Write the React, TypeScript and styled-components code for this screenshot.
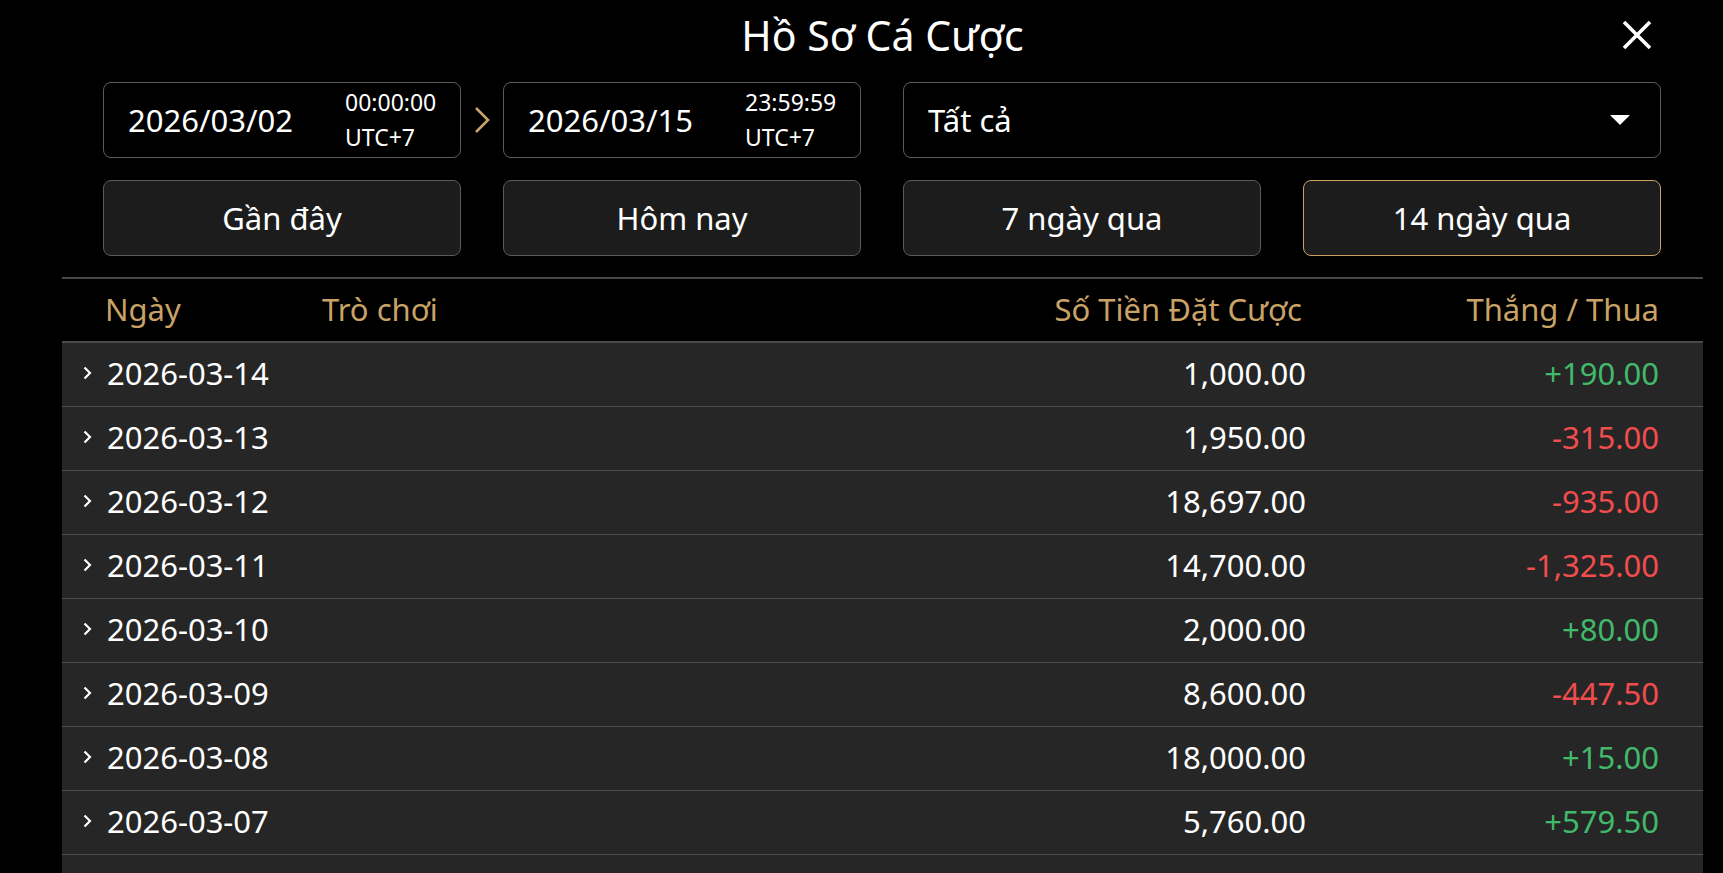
import React from "react";
import styled, { createGlobalStyle } from "styled-components";

const GlobalStyle = createGlobalStyle`
  html, body {
    margin: 0;
    padding: 0;
    background: #000;
    font-family: "Noto Sans", "Open Sans", sans-serif;
    color: #fff;
  }
  * { box-sizing: border-box; }
`;

const Page = styled.div`
  width: 1723px;
  height: 873px;
  overflow: hidden;
  padding: 0 20px 0 62px;
  display: flex;
`;

const Modal = styled.div`
  flex: 1;
  display: flex;
  flex-direction: column;
`;

const TitleBar = styled.div`
  display: grid;
  grid-template-columns: 1fr auto 1fr;
  align-items: center;
  height: 70px;
  padding: 0 51px;
`;

const Title = styled.h1`
  grid-column: 2;
  margin: 0;
  font-size: 41px;
  font-weight: 400;
  line-height: 1;
  color: #fff;
`;

const CloseButton = styled.button`
  grid-column: 3;
  justify-self: end;
  width: 30px;
  height: 30px;
  padding: 0;
  border: 0;
  background: transparent;
  display: flex;
  align-items: center;
  justify-content: center;
  cursor: pointer;
`;

const Filters = styled.div`
  display: flex;
  flex-direction: column;
  gap: 22px;
  padding: 12px 42px 21px 41px;
`;

const DateRow = styled.div`
  display: grid;
  grid-template-columns: 358px 42px 358px 42px 1fr;
  height: 76px;
`;

const DateBox = styled.div`
  display: flex;
  align-items: center;
  justify-content: space-between;
  border: 1.5px solid #5b5b5b;
  border-radius: 8px;
  background: #000;
  padding: 0 23px 0 24px;
`;

const DateText = styled.span`
  font-size: 31px;
  line-height: 1;
`;

const TimeStack = styled.div`
  display: flex;
  flex-direction: column;
  gap: 7px;
  font-size: 23px;
  line-height: 1.2;
  width: 92px;
`;

const Arrow = styled.div`
  display: flex;
  align-items: center;
  justify-content: center;
`;

const Select = styled.div`
  grid-column: 5;
  display: flex;
  align-items: center;
  justify-content: space-between;
  border: 1.5px solid #5b5b5b;
  border-radius: 8px;
  background: #000;
  padding: 0 30px 0 24px;
  font-size: 31px;
`;

const Presets = styled.div`
  display: grid;
  grid-template-columns: repeat(4, 1fr);
  gap: 42px;
  height: 76px;
`;

const PresetButton = styled.button<{ $active?: boolean }>`
  border: 1.5px solid ${(p) => (p.$active ? "#c9a266" : "#5b5b5b")};
  border-radius: 8px;
  background: #1c1c1c;
  color: #fff;
  font-family: inherit;
  font-size: 31px;
  cursor: pointer;
`;

const Table = styled.div`
  flex: 1;
  border-top: 2px solid #474747;
  display: flex;
  flex-direction: column;
`;

const HeaderRow = styled.div`
  display: grid;
  grid-template-columns: 217px 1fr 300px 353px;
  align-items: center;
  height: 64px;
  padding: 0 44px 2px 43px;
  border-bottom: 2px solid #4a4a4a;
`;

const HeaderCell = styled.div<{ $right?: boolean; $pr?: number }>`
  color: #c9a266;
  font-size: 31px;
  text-align: ${(p) => (p.$right ? "right" : "left")};
  padding-right: ${(p) => p.$pr ?? 0}px;
`;

const Body = styled.div`
  flex: 1;
  background: #262626;
  display: flex;
  flex-direction: column;
`;

const Row = styled.div`
  display: grid;
  grid-template-columns: 240px 1fr 300px 353px;
  align-items: center;
  height: 64px;
  flex-shrink: 0;
  padding: 0 44px 3px 20px;
  border-bottom: 1px solid #4e4e4e;
  font-size: 31px;
`;

const DateCell = styled.div`
  display: flex;
  align-items: center;
  gap: 15px;
`;

const Amount = styled.div`
  text-align: right;
`;

const WinLoss = styled.div<{ $positive: boolean }>`
  text-align: right;
  color: ${(p) => (p.$positive ? "#41b96a" : "#f24d4d")};
`;

const CloseIcon = () => (
  <svg width="30" height="30" viewBox="0 0 30 30">
    <path d="M2 2 L28 28 M28 2 L2 28" stroke="#fff" strokeWidth="3.6" strokeLinecap="butt" />
  </svg>
);

const GoldChevron = () => (
  <svg width="16" height="26" viewBox="0 0 16 26">
    <polyline points="2,1 14,13 2,25" fill="none" stroke="#c9a266" strokeWidth="2.6" />
  </svg>
);

const Caret = () => (
  <svg width="20" height="10" viewBox="0 0 20 10">
    <polygon points="0,0 20,0 10,10" fill="#fff" />
  </svg>
);

const RowChevron = () => (
  <svg width="10" height="14" viewBox="0 0 10 14">
    <polyline points="2.5,1.5 8,7 2.5,12.5" fill="none" stroke="#fff" strokeWidth="2.2" />
  </svg>
);

const rows = [
  { date: "2026-03-14", amount: "1,000.00", wl: "+190.00" },
  { date: "2026-03-13", amount: "1,950.00", wl: "-315.00" },
  { date: "2026-03-12", amount: "18,697.00", wl: "-935.00" },
  { date: "2026-03-11", amount: "14,700.00", wl: "-1,325.00" },
  { date: "2026-03-10", amount: "2,000.00", wl: "+80.00" },
  { date: "2026-03-09", amount: "8,600.00", wl: "-447.50" },
  { date: "2026-03-08", amount: "18,000.00", wl: "+15.00" },
  { date: "2026-03-07", amount: "5,760.00", wl: "+579.50" },
];

const presets = ["Gần đây", "Hôm nay", "7 ngày qua", "14 ngày qua"];

export default function App() {
  return (
    <>
      <GlobalStyle />
      <Page>
        <Modal>
          <TitleBar>
            <Title>Hồ Sơ Cá Cược</Title>
            <CloseButton aria-label="close">
              <CloseIcon />
            </CloseButton>
          </TitleBar>
          <Filters>
            <DateRow>
              <DateBox>
                <DateText>2026/03/02</DateText>
                <TimeStack>
                  <span>00:00:00</span>
                  <span>UTC+7</span>
                </TimeStack>
              </DateBox>
              <Arrow>
                <GoldChevron />
              </Arrow>
              <DateBox>
                <DateText>2026/03/15</DateText>
                <TimeStack>
                  <span>23:59:59</span>
                  <span>UTC+7</span>
                </TimeStack>
              </DateBox>
              <Select>
                <span>Tất cả</span>
                <Caret />
              </Select>
            </DateRow>
            <Presets>
              {presets.map((p, i) => (
                <PresetButton key={p} $active={i === 3}>
                  {p}
                </PresetButton>
              ))}
            </Presets>
          </Filters>
          <Table>
            <HeaderRow>
              <HeaderCell>Ngày</HeaderCell>
              <HeaderCell>Trò chơi</HeaderCell>
              <HeaderCell $right $pr={4}>Số Tiền Đặt Cược</HeaderCell>
              <HeaderCell $right>Thắng / Thua</HeaderCell>
            </HeaderRow>
            <Body>
              {rows.map((r) => (
                <Row key={r.date}>
                  <DateCell>
                    <RowChevron />
                    <span>{r.date}</span>
                  </DateCell>
                  <div />
                  <Amount>{r.amount}</Amount>
                  <WinLoss $positive={r.wl.startsWith("+")}>{r.wl}</WinLoss>
                </Row>
              ))}
            </Body>
          </Table>
        </Modal>
      </Page>
    </>
  );
}
